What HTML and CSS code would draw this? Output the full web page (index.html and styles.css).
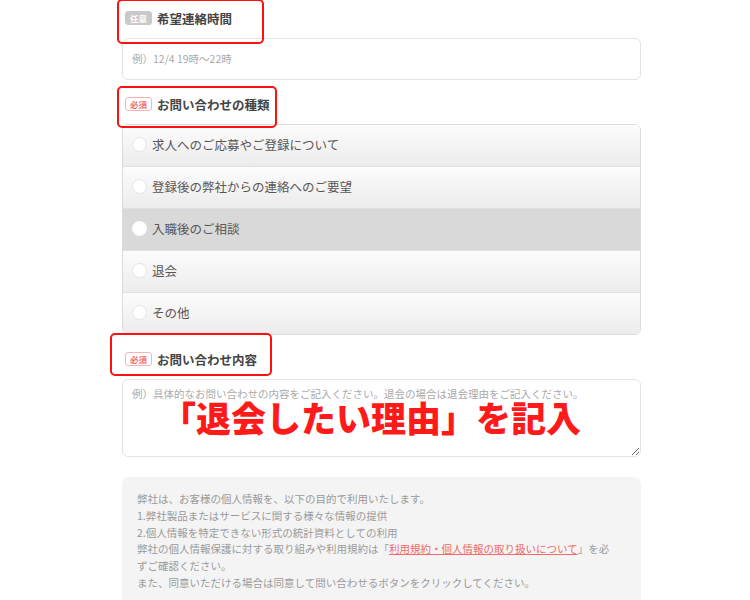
FILE: index.html
```html
<!DOCTYPE html>
<html lang="ja">
	<head>
		<meta charset="utf-8">
		<title>お問い合わせ</title>
		<link rel="stylesheet" href="styles.css">
	</head>
	<body>

<div class="page">
	<div class="field field-first">
		<div class="label"><span class="badge badge-any">任意</span>希望連絡時間</div>
		<input class="text-input" type="text" placeholder="例）12/4 19時～22時">
	</div>

	<div class="field">
		<div class="label"><span class="badge badge-must">必須</span>お問い合わせの種類</div>
		<div class="radio-list">
			<div class="radio-row"><span class="radio"></span>求人へのご応募やご登録について</div>
			<div class="radio-row"><span class="radio"></span>登録後の弊社からの連絡へのご要望</div>
			<div class="radio-row radio-row-on"><span class="radio"></span>入職後のご相談</div>
			<div class="radio-row"><span class="radio"></span>退会</div>
			<div class="radio-row"><span class="radio"></span>その他</div>
		</div>
	</div>

	<div class="field">
		<div class="label"><span class="badge badge-must">必須</span>お問い合わせ内容</div>
		<textarea class="text-area" placeholder="例）具体的なお問い合わせの内容をご記入ください。退会の場合は退会理由をご記入ください。"></textarea>
	</div>

	<div class="notice">
		弊社は、お客様の個人情報を、以下の目的で利用いたします。<br>
		1.弊社製品またはサービスに関する様々な情報の提供<br>
		2.個人情報を特定できない形式の統計資料としての利用<br>
		弊社の個人情報保護に対する取り組みや利用規約は「<a href="#">利用規約・個人情報の取り扱いについて</a>」を必ずご確認ください。<br>
		また、同意いただける場合は同意して問い合わせるボタンをクリックしてください。
	</div>
</div>

<!-- annotations -->
<div class="mark mark-1"></div>
<div class="mark mark-2"></div>
<div class="mark mark-3"></div>
<div class="memo">「退会したい理由」を記入</div>

	</body>
</html>
```

FILE: styles.css
```css
* { box-sizing: border-box; }

html, body {
	margin: 0;
	padding: 0;
	background: #fff;
}

body {
	position: relative;
	height: 600px;
	overflow: hidden;
	font-family: "Noto Sans CJK JP", "Noto Sans", sans-serif;
	color: #555;
}

.page {
	margin-left: 122px;
	width: 519px;
	padding-top: 5px;
}

.field {
	margin-top: 11px;
}

.field-first {
	margin-top: 0;
}

.label {
	display: flex;
	align-items: center;
	height: 26px;
	margin-bottom: 7px;
	padding-left: 3px;
	font-size: 12.5px;
	font-weight: bold;
	color: #444;
}

.badge {
	display: inline-block;
	width: 27px;
	height: 14px;
	margin-right: 5px;
	border-radius: 3px;
	font-size: 8.5px;
	line-height: 12px;
	text-align: center;
	font-weight: bold;
}

.badge-any {
	background: #c9c9c9;
	border: 1px solid #c9c9c9;
	color: #fff;
}

.badge-must {
	background: #fff;
	border: 1px solid #f8b4b4;
	color: #f26a6a;
}

.text-input,
.text-area {
	display: block;
	width: 100%;
	border: 1px solid #e3e3e3;
	border-radius: 6px;
	background: #fff;
	font-family: "Noto Sans CJK JP", "Noto Sans", sans-serif;
	font-size: 10.5px;
	color: #555;
	outline: none;
}

.text-input {
	height: 42px;
	padding: 0 9px 1px;
}

.text-area {
	height: 78px;
	padding: 6px 9px;
	line-height: 16px;
	resize: both;
}

.text-input::placeholder,
.text-area::placeholder {
	color: #aaa;
}

.radio-list {
	border: 1px solid #dcdcdc;
	border-radius: 6px;
	overflow: hidden;
}

.radio-row {
	display: flex;
	align-items: center;
	height: 42px;
	padding-left: 9px;
	padding-bottom: 3px;
	border-top: 1px solid #e0e0e0;
	background: linear-gradient(#fcfcfc, #ececec);
	font-size: 12.5px;
	color: #5a5555;
}

.radio-row:first-child {
	border-top: none;
	height: 41px;
}

.radio-row-on {
	background: #d9d9d9;
}

.radio {
	display: inline-block;
	width: 15px;
	height: 15px;
	margin-right: 5px;
	border-radius: 50%;
	background: #fff;
	border: 1px solid #e4e4e4;
}

.radio-row-on .radio {
	border-color: #fff;
}

.notice {
	margin-top: 20px;
	padding: 14px 28px 20px 15px;
	border-radius: 8px;
	background: #f4f4f4;
	font-size: 10.5px;
	line-height: 16.8px;
	color: #9a9a9a;
}

.notice a {
	color: #f26a6a;
}

/* annotations over the form */
.mark {
	position: absolute;
	border: 2px solid #ff1010;
	border-radius: 5px;
}

.mark-1 { left: 117px; top: -1px; width: 147px; height: 45px; }
.mark-2 { left: 117px; top: 86px; width: 160px; height: 42px; }
.mark-3 { left: 110px; top: 333px; width: 162px; height: 43px; }

.memo {
	position: absolute;
	left: 161px;
	top: 397px;
	font-size: 35px;
	line-height: 40px;
	font-weight: 900;
	color: #ff1a1a;
	white-space: nowrap;
}
```
